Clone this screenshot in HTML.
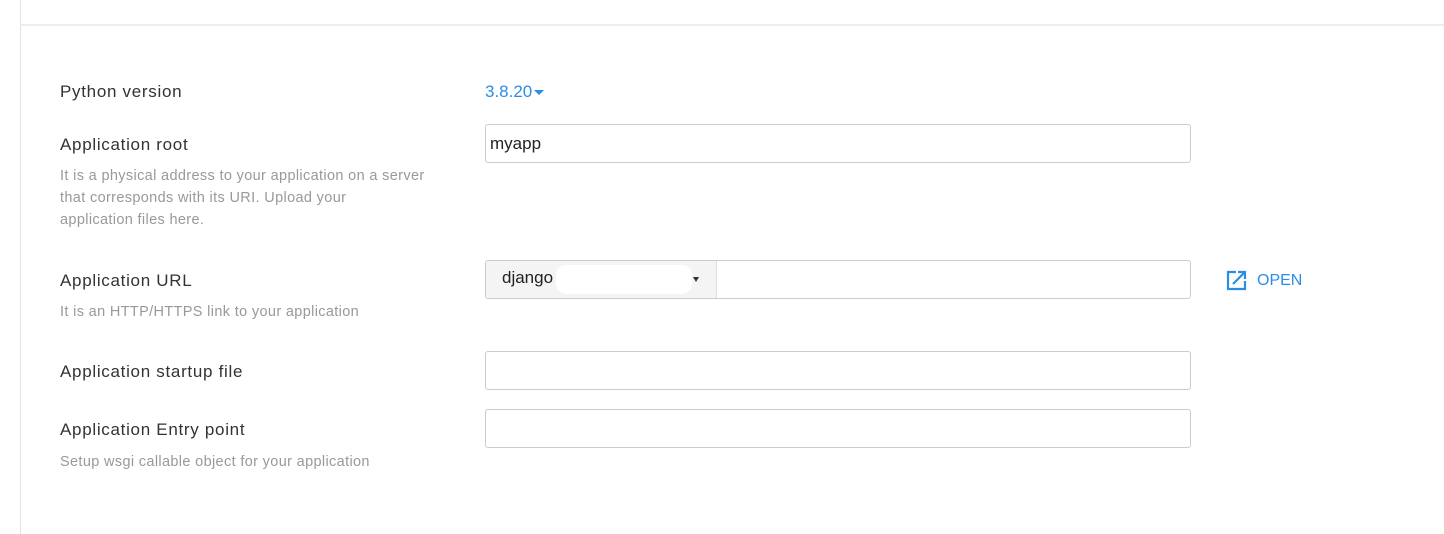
<!DOCTYPE html>
<html><head><meta charset="utf-8"><style>
*{box-sizing:border-box;margin:0;padding:0}
body{width:1444px;height:534px;background:#fff;font-family:"Liberation Sans",sans-serif;position:relative;overflow:hidden}
.vl{position:absolute;left:20px;top:0;width:1px;height:534px;background:#e3e3e3}
.hl{position:absolute;left:21px;right:0;top:24px;height:2px;background:#eeeeee}
.lab{position:absolute;left:60px;font-size:17px;color:#333;letter-spacing:0.7px}
.desc{position:absolute;left:60px;font-size:14.5px;color:#999;line-height:22px;width:385px;letter-spacing:0.35px}
.inp{position:absolute;left:485px;width:706px;height:39px;border:1px solid #ccc;border-radius:3px;background:#fff}
.txt{position:absolute;font-size:17px;color:#222}
</style></head><body>
<div class="vl"></div><div class="hl"></div>

<div class="lab" style="top:82px">Python version</div>
<div style="position:absolute;left:485px;top:82px;font-size:17px;color:#2a8ee6">3.8.20<span style="display:inline-block;width:0;height:0;border-left:5px solid transparent;border-right:5px solid transparent;border-top:5px solid #2a8ee6;vertical-align:middle;margin-left:2px"></span></div>

<div class="lab" style="top:135px">Application root</div>
<div class="inp" style="top:124px"></div>
<div class="txt" style="left:490px;top:134px">myapp</div>
<div class="desc" style="top:165px">It is a physical address to your application on a server<br>that corresponds with its URI. Upload your<br>application files here.</div>

<div class="lab" style="top:271px">Application URL</div>
<div class="inp" style="top:260px;overflow:hidden">
  <div style="position:absolute;left:0;top:0;width:231px;height:37px;background:#f4f4f4;border-right:1px solid #ddd"></div>
  <div style="position:absolute;left:70px;top:4px;width:136px;height:29px;background:#fff;border-radius:10px"></div>
  <div style="position:absolute;left:16px;top:7px;font-size:17px;color:#222">django</div>
  <div style="position:absolute;left:207px;top:16px;width:0;height:0;border-left:3px solid transparent;border-right:3px solid transparent;border-top:5px solid #333"></div>
</div>
<svg style="position:absolute;left:1226px;top:270px" width="21" height="21" viewBox="0 0 21 21"><path d="M10 2H2v17h17v-8" fill="none" stroke="#2a8ee6" stroke-width="2.2"/><path d="M7 14L18 3M12 2h7v7" fill="none" stroke="#2a8ee6" stroke-width="2.2"/></svg>
<div style="position:absolute;left:1257px;top:272px;font-size:16px;color:#2a8ee6">OPEN</div>
<div class="desc" style="top:301px">It is an HTTP/HTTPS link to your application</div>

<div class="lab" style="top:362px">Application startup file</div>
<div class="inp" style="top:351px"></div>

<div class="lab" style="top:420px">Application Entry point</div>
<div class="inp" style="top:409px"></div>
<div class="desc" style="top:451px">Setup wsgi callable object for your application</div>
</body></html>
